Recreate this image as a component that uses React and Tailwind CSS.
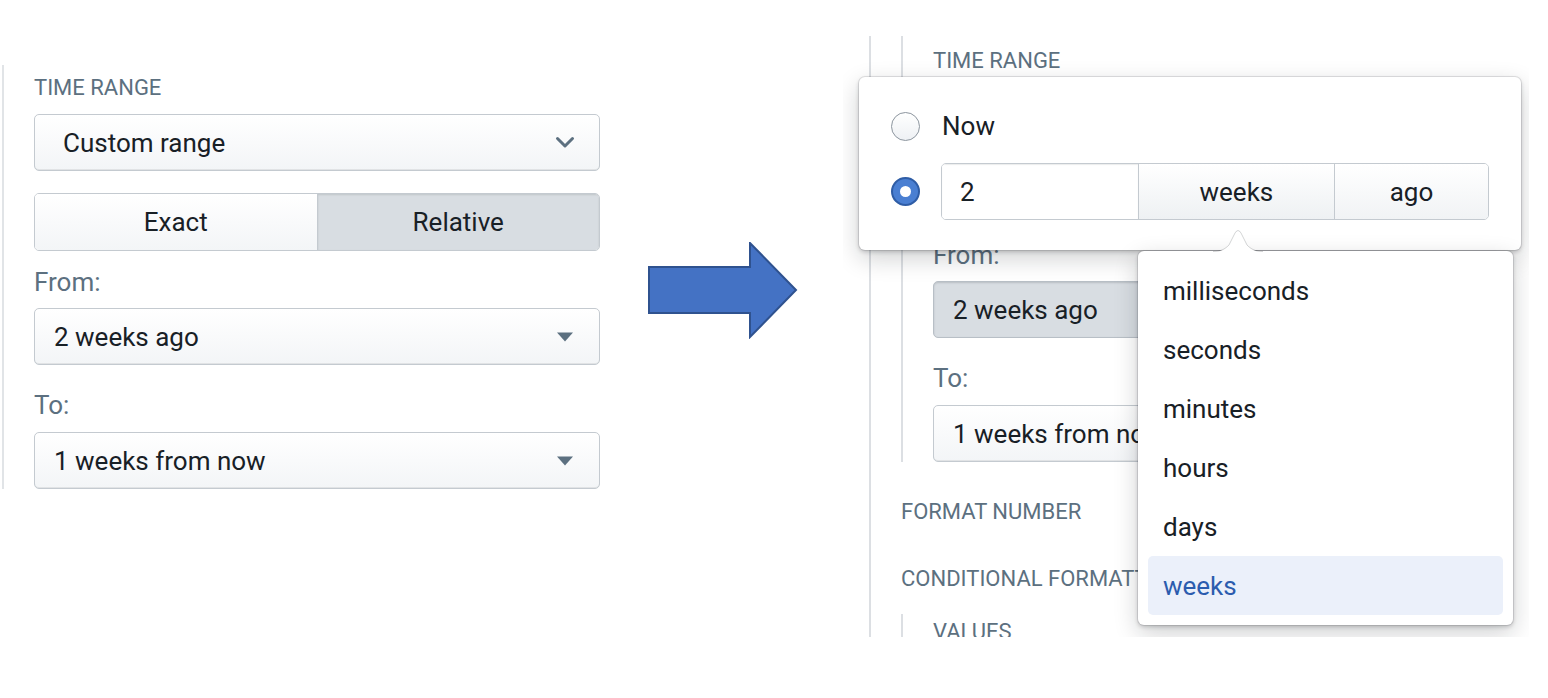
import React from "react";

const Caret = () => (
  <svg width="16" height="10" viewBox="0 0 16 10">
    <path d="M0 0.5 H16 L8 9.5 Z" fill="#5c7080" />
  </svg>
);

const Chevron = () => (
  <svg width="20" height="13" viewBox="0 0 20 13">
    <path
      d="M2.5 2.5 L10 10 L17.5 2.5"
      fill="none"
      stroke="#5c7080"
      strokeWidth="3"
      strokeLinecap="round"
      strokeLinejoin="round"
    />
  </svg>
);

const btn =
  "border border-[#c4cad0] bg-linear-to-b from-white to-[#f3f5f7] shadow-[inset_0_-1px_0_rgba(16,22,26,0.08)]";
const pressed =
  "border border-[#b8bfc6] bg-[#d8dde2] shadow-[inset_0_1px_2px_rgba(16,22,26,0.15)]";

function Select({ text, active, chevron, pl }) {
  return (
    <div
      className={`flex h-[57px] items-center justify-between rounded-[5px] ${pl} ${
        chevron ? "pr-[24px]" : "pr-[26px]"
      } ${active ? pressed : btn}`}
    >
      <span className="truncate text-[26px] leading-[30px] text-[#182026]">{text}</span>
      {chevron ? <Chevron /> : <Caret />}
    </div>
  );
}

function TimeRange({ fromActive }) {
  return (
    <div className="w-[566px]">
      <div className="text-[22px] leading-[26px] text-[#5c7080]">TIME RANGE</div>
      <div className="mt-[13px]">
        <Select text="Custom range" chevron pl="pl-[28px]" />
      </div>
      <div className="mt-[22px] flex h-[58px] overflow-hidden rounded-[5px] border border-[#c4cad0] text-[26px] leading-[30px] text-[#182026]">
        <div className="flex flex-1 items-center justify-center bg-linear-to-b from-white to-[#f3f5f7]">
          Exact
        </div>
        <div className="flex flex-1 items-center justify-center border-l border-[#c4cad0] bg-[#d8dde2] shadow-[inset_0_1px_2px_rgba(16,22,26,0.12)]">
          Relative
        </div>
      </div>
      <div className="mt-[16px] text-[26px] leading-[30px] text-[#5c7080]">From:</div>
      <div className="mt-[11px]">
        <Select text="2 weeks ago" active={fromActive} pl="pl-[19px]" />
      </div>
      <div className="mt-[25px] text-[26px] leading-[30px] text-[#5c7080]">To:</div>
      <div className="mt-[12px]">
        <Select text="1 weeks from now" pl="pl-[19px]" />
      </div>
    </div>
  );
}

function Radio({ checked }) {
  return checked ? (
    <div className="flex h-[29px] w-[29px] items-center justify-center rounded-full border-2 border-[#2f5da6] bg-[#4a7fd2]">
      <div className="h-[11px] w-[11px] rounded-full bg-white" />
    </div>
  ) : (
    <div className="h-[29px] w-[29px] rounded-full border-[1.5px] border-[#8c959e] bg-linear-to-b from-white to-[#eef1f4]" />
  );
}

const units = ["milliseconds", "seconds", "minutes", "hours", "days", "weeks"];

export default function App() {
  return (
    <div className="flex h-[698px] w-[1548px] items-start overflow-hidden bg-white font-['Roboto',sans-serif]">
      {/* before */}
      <div className="ml-[2px] mt-[65px] border-l-2 border-[#e1e4e7] pl-[30px] pt-[10px]">
        <TimeRange />
      </div>

      {/* arrow */}
      <svg className="ml-[48px] mt-[242px] shrink-0" width="152" height="97" viewBox="0 0 152 97">
        <path
          d="M1 25 H102 V1 L148 48 L102 95 V71 H1 Z"
          fill="#4472c4"
          stroke="#2f528f"
          strokeWidth="2"
          strokeLinejoin="miter"
        />
      </svg>

      {/* after */}
      <div className="relative ml-[43px] mt-[30px] h-[607px] w-[686px] shrink-0 overflow-hidden bg-white">
        <div className="ml-[26px] mt-[6px] h-[640px] border-l-2 border-[#dcdfe3] pl-[30px]">
          <div className="border-l-2 border-[#dcdfe3] pl-[30px] pt-[12px]">
            <TimeRange fromActive />
          </div>
          <div className="mt-[37px] text-[22px] leading-[26px] text-[#5c7080]">FORMAT NUMBER</div>
          <div className="mt-[41px] whitespace-nowrap text-[22px] leading-[26px] text-[#5c7080]">
            CONDITIONAL FORMATTING
          </div>
          <div className="mt-[22px] border-l-2 border-[#dcdfe3] pl-[30px] pt-[5px] text-[22px] leading-[26px] text-[#5c7080]">
            VALUES
          </div>
        </div>

        {/* popover */}
        <div className="absolute left-[16px] top-[47px] h-[173px] w-[662px] rounded-[6px] bg-white px-[32px] pt-[20px] shadow-[0_0_0_1px_rgba(16,22,26,0.1),0_2px_4px_rgba(16,22,26,0.2),0_8px_24px_rgba(16,22,26,0.2)]">
          <div className="flex h-[58px] items-center gap-[22px]">
            <Radio />
            <span className="text-[26px] leading-[30px] text-[#182026]">Now</span>
          </div>
          <div className="mt-[8px] flex h-[57px] items-center gap-[21px]">
            <Radio checked />
            <div className="flex h-[57px] w-[551px] overflow-hidden rounded-[5px] border border-[#c4cad0] text-[26px] leading-[30px] text-[#182026]">
              <div className="flex w-[196px] items-center bg-white pl-[18px] shadow-[inset_0_1px_1px_rgba(16,22,26,0.08)]">
                2
              </div>
              <div className="flex w-[196px] items-center justify-center border-l border-[#c4cad0] bg-linear-to-b from-white to-[#eef1f3]">
                weeks
              </div>
              <div className="flex flex-1 items-center justify-center border-l border-[#c4cad0] bg-linear-to-b from-white to-[#f1f3f5]">
                ago
              </div>
            </div>
          </div>
        </div>

        {/* units menu */}
        <div className="absolute left-[295px] top-[221px] h-[374px] w-[375px] rounded-[6px] bg-white p-[10px] shadow-[0_0_0_1px_rgba(16,22,26,0.1),0_2px_4px_rgba(16,22,26,0.2),0_8px_24px_rgba(16,22,26,0.2)]">
          {units.map((u) => (
            <div
              key={u}
              className={`flex h-[59px] items-center rounded-[5px] pl-[15px] text-[26px] leading-[30px] ${
                u === "weeks" ? "bg-[#ebf0fa] text-[#2b5cae]" : "text-[#182026]"
              }`}
            >
              {u}
            </div>
          ))}
        </div>
        <svg className="absolute left-[370px] top-[199px]" width="50" height="24" viewBox="0 0 50 24">
          <path d="M0 23 C8 23 12 20 16 16 L22 4 Q25 -1 28 4 L34 16 C38 20 42 23 50 23 Z" fill="white" />
          <path
            d="M0 22.5 C8 22.5 12 20 16 16 L22 4 Q25 -1 28 4 L34 16 C38 20 42 22.5 50 22.5"
            fill="none"
            stroke="rgba(16,22,26,0.18)"
            strokeWidth="1"
          />
        </svg>
      </div>
    </div>
  );
}
